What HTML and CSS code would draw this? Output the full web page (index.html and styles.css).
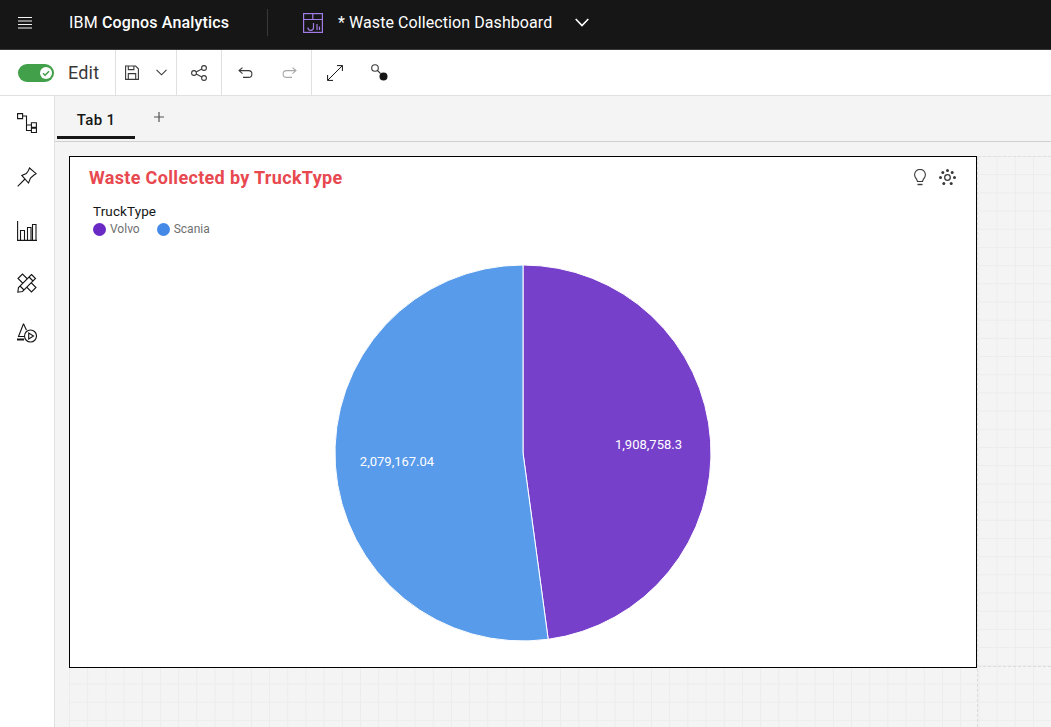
FILE: index.html
```html
<!DOCTYPE html>
<html lang="en">
<head>
    <meta charset="UTF-8">
    <meta name="viewport" content="width=device-width, initial-scale=1.0">
    <title>IBM Cognos Analytics - Waste Collection Dashboard</title>
    <link rel="stylesheet" href="styles.css">
</head>
<body>

    <header class="topbar">
        <svg class="menu-icon" width="14" height="12" viewBox="0 0 14 12" fill="none" stroke="#f4f4f4" stroke-width="1">
            <path d="M0 .5h14M0 4h14M0 7.500h14M0 11h14"/>
        </svg>
        <div class="brand">IBM <b>Cognos Analytics</b></div>
        <div class="topbar-divider"></div>
        <svg class="dash-icon" width="20" height="20" viewBox="0 0 20 20" fill="none" stroke="#a27ce6" stroke-width="1.200">
            <rect x=".6" y=".6" width="18.800" height="18.800"/>
            <path d="M.6 6.500h18.800M9.800 .6v5.900"/>
            <path d="M10.500 10v4.500a2.800 2.800 0 0 1-5.600 0M14 11v6M16.500 13.500v3.500"/>
        </svg>
        <div class="dash-title">* Waste Collection Dashboard</div>
        <svg class="dash-chevron" width="14" height="9" viewBox="0 0 14 9" fill="none" stroke="#fff" stroke-width="1.600">
            <path d="M.7 1l6.300 6.600L13.300 1"/>
        </svg>
    </header>

    <div class="toolbar">
        <div class="tool-group group-edit">
            <span class="toggle">
                <svg class="toggle-knob" width="12" height="12" viewBox="0 0 12 12">
                    <circle cx="6" cy="6" r="6" fill="#fff"/>
                    <path d="M3 6.200l2.100 2.100L9 4.200" fill="none" stroke="#42a04a" stroke-width="1.500"/>
                </svg>
            </span>
            <span class="edit-label">Edit</span>
        </div>
        <div class="tool-group group-save">
            <svg width="14" height="15" viewBox="0 0 14 15" fill="none" stroke="#393939" stroke-width="1.100">
                <path d="M.6 1h10l2.800 2.800v10.600H.6z"/>
                <path d="M3.300 1v3.600h5.600V1M3.300 14.400V8.600h7.400v5.800"/>
            </svg>
            <svg width="11" height="7" viewBox="0 0 11 7" fill="none" stroke="#393939" stroke-width="1.100">
                <path d="M.5 .8l5 5 5-5"/>
            </svg>
        </div>
        <div class="tool-group group-share">
            <svg width="16" height="16" viewBox="0 0 16 16" fill="none" stroke="#393939" stroke-width="1.100">
                <circle cx="3" cy="8" r="2.400"/>
                <circle cx="13" cy="3" r="2.400"/>
                <circle cx="13" cy="13" r="2.400"/>
                <path d="M5.200 6.900l5.600-2.800M5.200 9.100l5.600 2.800"/>
            </svg>
        </div>
        <div class="tool-group group-history">
            <svg width="15" height="11" viewBox="0 0 15 11" fill="none" stroke="#393939" stroke-width="1.100">
                <path d="M4.500 .6L1 3.600l3.500 3M1 3.600h9.500a3.400 3.400 0 0 1 0 6.800H5"/>
            </svg>
            <svg width="15" height="11" viewBox="0 0 15 11" fill="none" stroke="#a8a8a8" stroke-width="1.100">
                <path d="M10.500 .6L14 3.600l-3.500 3M14 3.600H4.500a3.400 3.400 0 0 0 0 6.800H10"/>
            </svg>
        </div>
        <div class="tool-group group-view">
            <svg width="16" height="16" viewBox="0 0 16 16" fill="none" stroke="#161616" stroke-width="1">
                <path d="M.6 15.400L15.400 .6M10 .6h5.400V6M.6 10v5.400H6"/>
            </svg>
            <svg width="17" height="17" viewBox="0 0 17 17">
                <circle cx="4" cy="4" r="3.300" fill="none" stroke="#393939" stroke-width="1.100"/>
                <path d="M6.500 6.500l3 3" stroke="#393939" stroke-width="1.100"/>
                <circle cx="12.500" cy="12.500" r="4" fill="#161616"/>
            </svg>
        </div>
    </div>

    <div class="workspace">
        <nav class="sidebar">
            <svg width="20" height="20" viewBox="0 0 20 20" fill="none" stroke="#161616" stroke-width="1.100">
                <path d="M.6.6h5v5h-5zM14.400 9.700h5v4.500h-5zM14.400 15.200h5v4.300h-5z"/>
                <path d="M5.600 3h3.900v14.500h4.900M9.500 12h4.900"/>
            </svg>
            <svg width="20" height="20" viewBox="0 0 20 20" fill="none" stroke="#161616" stroke-width="1.100">
                <path d="M12.500 1L19.200 6.700 17 8 13.500 11 11.500 16 4.800 8.400 9.300 6.500 11.500 3.500z"/>
                <path d="M8 12L.7 19.300"/>
            </svg>
            <svg width="20" height="20" viewBox="0 0 20 20" fill="none" stroke="#161616" stroke-width="1.100">
                <path d="M.6 0v19.400H20"/>
                <path d="M3.500 19.400V9.500h4v9.900M10.500 19.400V6.500h3.500v12.900M15.500 19.400V3.500h3.500v15.900"/>
            </svg>
            <svg width="20" height="20" viewBox="0 0 20 20" fill="none" stroke="#161616" stroke-width="1.100">
                <path d="M1 5.500L5.500 1l13.500 13.500-4.500 4.500z"/>
                <path d="M14.500 1.500l4 4L5.500 18.500.8 19.200 1.500 14.500z" fill="#fff"/>
                <path d="M12 4l4 4M3 13l4 4"/>
            </svg>
            <svg width="20" height="20" viewBox="0 0 20 20" fill="none" stroke="#161616" stroke-width="1.100">
                <path d="M6.500.8L1.500 13.500h6M6.500.8l3 6.500"/>
                <path d="M0 16.500h7" stroke-width="2"/>
                <circle cx="13.500" cy="13" r="6"/>
                <path d="M11.700 10v6l4.800-3z"/>
            </svg>
        </nav>

        <main class="content">
            <div class="tabbar">
                <div class="tab">Tab 1</div>
                <svg class="tab-add" width="10" height="10" viewBox="0 0 10 10" stroke="#525252" stroke-width="1.200">
                    <path d="M5 0v10M0 5h10"/>
                </svg>
            </div>

            <div class="canvas">
                <div class="page-grid">
                    <section class="widget">
                        <div class="widget-head">
                            <h2 class="widget-title">Waste Collected by TruckType</h2>
                            <div class="widget-tools">
                                <svg width="12" height="17" viewBox="0 0 12 17" fill="none" stroke="#393939" stroke-width="1.100">
                                    <path d="M3.500 12.500C3.300 10 .6 9 .6 5.800a5.400 5.400 0 0 1 10.800 0c0 3.200-2.700 4.200-2.900 6.700z"/>
                                    <path d="M3.500 15.500h5" stroke-width="1.400"/>
                                </svg>
                                <svg width="17" height="17" viewBox="0 0 17 17" fill="#393939">
                                    <circle cx="8.500" cy="8.500" r="2.800" fill="none" stroke="#393939" stroke-width="1.300"/>
                                    <circle cx="8.500" cy="1.500" r="1.500"/>
                                    <circle cx="3.800" cy="3.500" r="1.500"/>
                                    <circle cx="13.200" cy="3.500" r="1.500"/>
                                    <circle cx="1.500" cy="8.500" r="1.500"/>
                                    <circle cx="15.500" cy="8.500" r="1.500"/>
                                    <circle cx="4.800" cy="14.500" r="1.500"/>
                                    <circle cx="12.200" cy="14.500" r="1.500"/>
                                </svg>
                            </div>
                        </div>
                        <div class="legend">
                            <div class="legend-title">TruckType</div>
                            <div class="legend-items">
                                <span class="legend-item"><i class="dot dot-volvo"></i>Volvo</span>
                                <span class="legend-item"><i class="dot dot-scania"></i>Scania</span>
                            </div>
                        </div>
                        <svg class="pie" width="380" height="380" viewBox="0 0 380 380">
                            <path d="M190 190V2A188 188 0 0 1 215.200 376.300z" fill="#7740cb" stroke="#fff" stroke-width="1"/>
                            <path d="M190 190L215.200 376.300A188 188 0 1 1 190 2z" fill="#589bea" stroke="#fff" stroke-width="1"/>
                            <text x="315.500" y="186" class="pie-label" text-anchor="middle">1,908,758.3</text>
                            <text x="64" y="203" class="pie-label" text-anchor="middle">2,079,167.04</text>
                        </svg>
                    </section>
                </div>
            </div>
        </main>
    </div>

</body>
</html>
```

FILE: styles.css
```css
/* Basic Styles */
* {
    box-sizing: border-box;
}

body {
    font-family: Roboto, "Noto Sans", Arial, sans-serif;
    margin: 0;
    height: 727px;
    overflow: hidden;
    display: flex;
    flex-direction: column;
    background-color: #ffffff;
    color: #161616;
}

svg {
    display: block;
    flex: none;
}

/* Top bar */
.topbar {
    height: 50px;
    flex: none;
    display: flex;
    align-items: center;
    background-color: #161616;
    border-bottom: 1px solid #393939;
    color: #ffffff;
    padding: 0 0 4px 18px;
}

.brand {
    margin-left: 37px;
    width: 198px;
    font-size: 16px;
    letter-spacing: 0.16px;
    white-space: nowrap;
}

.brand b {
    font-weight: 500;
}

.topbar-divider {
    width: 1px;
    height: 27px;
    background-color: #393939;
}

.dash-icon {
    margin-left: 35px;
}

.dash-title {
    margin-left: 15px;
    font-size: 16px;
    letter-spacing: 0.08px;
    white-space: nowrap;
}

.dash-chevron {
    margin-left: 23px;
}

/* Toolbar */
.toolbar {
    height: 46px;
    flex: none;
    display: flex;
    border-bottom: 1px solid #e0e0e0;
}

.tool-group {
    display: flex;
    align-items: center;
    border-right: 1px solid #e0e0e0;
}

.group-edit {
    width: 116px;
    padding-left: 18px;
}

.toggle {
    width: 36px;
    height: 18px;
    border-radius: 9px;
    background-color: #42a04a;
    display: flex;
    align-items: center;
    justify-content: flex-end;
    padding-right: 2px;
}

.edit-label {
    margin-left: 14px;
    font-size: 18px;
    letter-spacing: 0.2px;
    color: #393939;
}

.group-save {
    width: 61px;
    padding-left: 9px;
    gap: 17px;
}

.group-share {
    width: 45px;
    padding-left: 14px;
}

.group-history {
    width: 90px;
    padding-left: 16px;
    gap: 29px;
}

.group-view {
    border-right: none;
    padding-left: 15px;
    gap: 28px;
}

/* Left icon rail */
.workspace {
    flex: 1;
    display: flex;
    min-height: 0;
}

.sidebar {
    width: 55px;
    flex: none;
    display: grid;
    grid-template-rows: 54px 54px 52px 50px 40px;
    align-content: start;
    justify-items: center;
    padding-top: 17px;
    border-right: 1px solid #e0e0e0;
}

/* Tabs */
.content {
    flex: 1;
    display: flex;
    flex-direction: column;
    background-color: #f4f4f4;
    min-width: 0;
}

.tabbar {
    height: 46px;
    flex: none;
    display: flex;
    align-items: flex-start;
    padding-left: 2px;
    border-bottom: 1px solid #cfcfcf;
}

.tab {
    width: 78px;
    height: 43px;
    padding-top: 15px;
    text-align: center;
    font-size: 15px;
    font-weight: 500;
    letter-spacing: 0.3px;
    border-bottom: 3px solid #161616;
}

.tab-add {
    margin-top: 16px;
    margin-left: 19px;
}

/* Dashboard canvas */
.canvas {
    flex: 1;
    display: flex;
    padding: 14px 0 0 14px;
    min-height: 0;
}

.page-grid {
    flex: 1;
    position: relative;
    border-top: 1px dashed #e0e0e0;
    background-image:
        linear-gradient(to right, #ececec 1px, transparent 1px),
        linear-gradient(to bottom, #ececec 1px, transparent 1px);
    background-size: 18.2px 18.2px;
    background-position: 0 -1px;
}

.page-grid::before {
    content: "";
    position: absolute;
    left: 0;
    top: 509px;
    right: 0;
    border-top: 1px dashed #dcdcdc;
}

.page-grid::after {
    content: "";
    position: absolute;
    left: 908px;
    top: 0;
    bottom: 0;
    border-left: 1px dashed #dcdcdc;
}

.widget {
    position: relative;
    z-index: 1;
    width: 908px;
    height: 512px;
    margin-top: -1px;
    background-color: #ffffff;
    border: 1px solid #000000;
    display: flex;
    flex-direction: column;
}

.widget-head {
    display: flex;
    justify-content: space-between;
    align-items: center;
    padding: 10px 20px 0 19px;
}

.widget-title {
    margin: 0;
    font-size: 18px;
    font-weight: 700;
    letter-spacing: 0.33px;
    color: #e8484f;
}

.widget-tools {
    display: flex;
    align-items: center;
    gap: 13px;
    margin-right: 0;
}

.legend {
    margin: 15px 0 0 23px;
    font-size: 13.5px;
}

.legend-title {
    color: #161616;
    line-height: 17px;
    letter-spacing: 0.1px;
}

.legend-items {
    display: flex;
    gap: 17px;
    font-size: 12px;
    color: #6f6f6f;
    line-height: 18px;
}

.legend-item {
    display: flex;
    align-items: center;
    gap: 4px;
}

.dot {
    width: 13px;
    height: 13px;
    border-radius: 50%;
}

.dot-volvo {
    background-color: #6929c4;
}

.dot-scania {
    background-color: #4589e8;
}

.pie {
    margin: 25px 0 0 263px;
}

.pie-label {
    fill: #ffffff;
    font-size: 13px;
}
```
